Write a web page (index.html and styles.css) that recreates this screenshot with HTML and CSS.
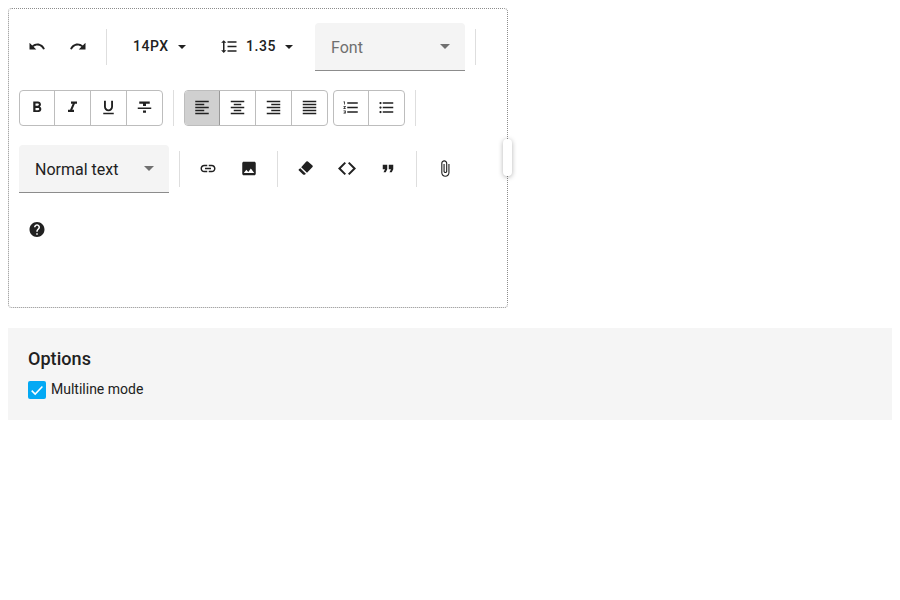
FILE: index.html
```html
<!DOCTYPE html>
<html lang="en">
<head>
<meta charset="utf-8">
<title>HTML editor</title>
<link rel="stylesheet" href="styles.css">
</head>
<body>
<div class="editor">
  <div class="row">
    <button class="btn"><svg class="icon" viewBox="0 0 24 24"><path d="M12.5 8c-2.65 0-5.05.99-6.9 2.6L2 7v9h9l-3.62-3.62c1.39-1.16 3.16-1.88 5.12-1.88 3.54 0 6.55 2.31 7.6 5.5l2.37-.78C21.08 11.03 17.15 8 12.5 8z"/></svg></button>
    <button class="btn gap"><svg class="icon" viewBox="0 0 24 24"><path d="M18.4 10.6C16.55 8.99 14.15 8 11.5 8c-4.65 0-8.58 3.03-9.96 7.22L3.9 16c1.05-3.19 4.05-5.5 7.6-5.5 1.95 0 3.73.72 5.12 1.88L13 16h9V7l-3.6 3.6z"/></svg></button>
    <span class="sep"></span>
    <button class="menu size"><span class="value">14PX</span><svg class="caret" viewBox="0 0 8 4"><path d="M0 0h8L4 4z"/></svg></button>
    <button class="menu height"><svg class="icon" viewBox="0 0 24 24"><path d="M6 7h2.5L5 3.5 1.5 7H4v10H1.5L5 20.5 8.5 17H6V7zm4-2v2h12V5H10zm0 14h12v-2H10v2zm0-6h12v-2H10v2z"/></svg><span class="value">1.35</span><svg class="caret" viewBox="0 0 8 4"><path d="M0 0h8L4 4z"/></svg></button>
    <div class="select gap placeholder"><span>Font</span><svg class="arrow" viewBox="0 0 10 5"><path d="M0 0h10L5 5z"/></svg></div>
    <span class="sep"></span>
  </div>
  <div class="row">
    <div class="group">
      <button class="cell"><svg class="icon" viewBox="0 0 24 24"><path d="M15.6 10.79c.97-.67 1.65-1.77 1.65-2.79 0-2.26-1.75-4-4-4H7v14h7.04c2.09 0 3.71-1.7 3.71-3.79 0-1.52-.86-2.82-2.15-3.42zM10 6.5h3c.83 0 1.5.67 1.5 1.5s-.67 1.5-1.5 1.5h-3v-3zm3.5 9H10v-3h3.5c.83 0 1.5.67 1.5 1.5s-.67 1.5-1.5 1.5z"/></svg></button>
      <button class="cell"><svg class="icon" viewBox="0 0 24 24"><path d="M10 4v3h2.21l-3.42 8H6v3h8v-3h-2.21l3.42-8H18V4z"/></svg></button>
      <button class="cell"><svg class="icon" viewBox="0 0 24 24"><path d="M12 17c3.31 0 6-2.69 6-6V3h-2.5v8c0 1.93-1.57 3.5-3.5 3.5S8.5 12.93 8.5 11V3H6v8c0 3.31 2.69 6 6 6zm-7 2v2h14v-2H5z"/></svg></button>
      <button class="cell"><svg class="icon" viewBox="0 0 24 24"><path d="M10 19h4v-3h-4v3zM5 4v3h5v3h4V7h5V4H5zM3 14h18v-2H3v2z"/></svg></button>
    </div>
    <span class="sep"></span>
    <div class="group">
      <button class="cell active"><svg class="icon" viewBox="0 0 24 24"><path d="M15 15H3v2h12v-2zm0-8H3v2h12V7zM3 13h18v-2H3v2zm0 8h18v-2H3v2zM3 3v2h18V3H3z"/></svg></button>
      <button class="cell"><svg class="icon" viewBox="0 0 24 24"><path d="M7 15v2h10v-2H7zm-4 6h18v-2H3v2zm0-8h18v-2H3v2zm4-6v2h10V7H7zM3 3v2h18V3H3z"/></svg></button>
      <button class="cell"><svg class="icon" viewBox="0 0 24 24"><path d="M3 21h18v-2H3v2zm6-4h12v-2H9v2zm-6-4h18v-2H3v2zm6-4h12V7H9v2zM3 3v2h18V3H3z"/></svg></button>
      <button class="cell"><svg class="icon" viewBox="0 0 24 24"><path d="M3 21h18v-2H3v2zm0-4h18v-2H3v2zm0-4h18v-2H3v2zm0-4h18V7H3v2zm0-6v2h18V3H3z"/></svg></button>
    </div>
    <div class="group gap">
      <button class="cell"><svg class="icon" viewBox="0 0 24 24"><path d="M2 17h2v.5H3v1h1v.5H2v1h3v-4H2v1zm1-9h1V4H2v1h1v3zm-1 3h1.8L2 13.1v.9h3v-1H3.2L5 10.9V10H2v1zm5-6v2h14V5H7zm0 14h14v-2H7v2zm0-6h14v-2H7v2z"/></svg></button>
      <button class="cell"><svg class="icon" viewBox="0 0 24 24"><path d="M4 10.5c-.83 0-1.5.67-1.5 1.5s.67 1.5 1.5 1.5 1.5-.67 1.5-1.5-.67-1.5-1.5-1.5zm0-6c-.83 0-1.5.67-1.5 1.5S3.17 7.5 4 7.5 5.5 6.83 5.5 6 4.83 4.5 4 4.5zm0 12c-.83 0-1.5.68-1.5 1.5s.68 1.5 1.5 1.5 1.5-.68 1.5-1.5-.67-1.5-1.5-1.5zM7 19h14v-2H7v2zm0-6h14v-2H7v2zm0-8v2h14V5H7z"/></svg></button>
    </div>
    <span class="sep"></span>
  </div>
  <div class="row">
    <div class="select"><span>Normal text</span><svg class="arrow" viewBox="0 0 10 5"><path d="M0 0h10L5 5z"/></svg></div>
    <span class="sep"></span>
    <button class="btn"><svg class="icon" viewBox="0 0 24 24"><path d="M3.9 12c0-1.71 1.39-3.1 3.1-3.1h4V7H7c-2.76 0-5 2.24-5 5s2.24 5 5 5h4v-1.9H7c-1.71 0-3.1-1.39-3.1-3.1zM8 13h8v-2H8v2zm9-6h-4v1.9h4c1.71 0 3.1 1.39 3.1 3.1s-1.39 3.1-3.1 3.1h-4V17h4c2.76 0 5-2.24 5-5s-2.24-5-5-5z"/></svg></button>
    <button class="btn gap"><svg class="icon" viewBox="0 0 24 24"><path d="M21 19V5c0-1.1-.9-2-2-2H5c-1.1 0-2 .9-2 2v14c0 1.1.9 2 2 2h14c1.1 0 2-.9 2-2zM8.5 13.5l2.500 3.01L14.500 12l4.500 6H5l3.500-4.500z"/></svg></button>
    <span class="sep"></span>
    <button class="btn"><svg class="icon" viewBox="0 0 18 18"><path d="M9.3 2.1q.8-.7 1.6 0l4.600 3.900q.7.700 0 1.500l-5.500 5.700-5.800-5.500zM3.300 8.700l5.600 5.500-.8.800q-1.100.8-2.300-.2L1.900 11.100q-.8-.8 0-1.400z"/></svg></button>
    <button class="btn gap"><svg class="icon line" viewBox="0 0 18 18"><path d="M7.300 3.100 1.400 9l5.900 5.900M10.700 3.100 16.600 9l-5.900 5.900"/></svg></button>
    <button class="btn gap"><svg class="icon" viewBox="0 0 24 24"><path d="M6 17h3l2-4V7H5v6h3zm8 0h3l2-4V7h-6v6h3z"/></svg></button>
    <span class="sep"></span>
    <button class="btn"><svg class="icon" viewBox="0 0 24 24"><path d="M16.5 6v11.5c0 2.21-1.79 4-4 4s-4-1.79-4-4V5c0-1.38 1.12-2.5 2.5-2.5s2.5 1.12 2.5 2.5v10.5c0 .55-.45 1-1 1s-1-.45-1-1V6H10v9.5c0 1.38 1.12 2.5 2.5 2.5s2.5-1.12 2.5-2.5V5c0-2.21-1.79-4-4-4S7 2.79 7 5v12.5c0 3.04 2.46 5.5 5.5 5.5s5.5-2.46 5.5-5.5V6h-1.5z"/></svg></button>
  </div>
  <div class="row">
    <button class="btn"><svg class="icon" viewBox="0 0 24 24"><path d="M12 2C6.48 2 2 6.48 2 12s4.48 10 10 10 10-4.48 10-10S17.52 2 12 2zm1 17h-2v-2h2v2zm2.07-7.75l-.9.92C13.45 12.9 13 13.5 13 15h-2v-.5c0-1.1.45-2.1 1.17-2.83l1.24-1.26c.37-.36.59-.86.59-1.41 0-1.1-.9-2-2-2s-2 .9-2 2H8c0-2.21 1.79-4 4-4s4 1.79 4 4c0 .88-.36 1.68-.93 2.25z"/></svg></button>
  </div>
  <span class="handle"></span>
</div>
<div class="options">
  <div class="caption">Options</div>
  <label class="option"><span class="check"><svg viewBox="0 0 18 18"><path d="M3.7 9.6 7.2 13.1 14.4 5.6"/></svg></span><span class="label">Multiline mode</span></label>
</div>
</body>
</html>
```
FILE: styles.css
```css
* { box-sizing: border-box; }

body {
  margin: 8px;
  background: #fff;
  color: #212121;
  font-family: Roboto, sans-serif;
  font-size: 14px;
}

.editor {
  position: relative;
  width: 500px;
  height: 300px;
  padding: 8px 10px;
  border: 1px dotted #8c8c8c;
  border-radius: 4px;
  display: flex;
  flex-direction: column;
  gap: 1px;
}

.row {
  height: 60px;
  display: flex;
  align-items: center;
}

.gap { margin-left: 5px; }

.sep {
  width: 1px;
  height: 36px;
  margin: 0 10px;
  background: #dedede;
}

button {
  margin: 0;
  padding: 0;
  border: 0;
  background: none;
  color: inherit;
  font: 500 14px/20px Roboto, sans-serif;
  display: flex;
  align-items: center;
  justify-content: center;
}

.btn {
  width: 36px;
  height: 36px;
}

.icon {
  display: block;
  width: 18px;
  height: 18px;
  fill: #212121;
  transform: translateY(-0.5px);
}

.cell + .cell .icon { transform: translate(-0.5px, -0.5px); }

.icon.line {
  fill: none;
  stroke: #212121;
  stroke-width: 2;
}

.menu {
  height: 36px;
  padding-left: 16px;
  justify-content: flex-start;
  letter-spacing: 0.56px;
}

.menu.size { width: 87px; }
.menu.height { width: 106px; }
.menu .icon { margin-right: 8px; }
.value { padding-bottom: 2px; }

.caret {
  width: 8px;
  height: 4px;
  margin-left: 9px;
  fill: #212121;
}

.select {
  width: 150px;
  height: 48px;
  padding: 0 15px 0 16px;
  border-bottom: 1px solid #8c8c8c;
  border-radius: 4px 4px 0 0;
  background: #f4f4f4;
  font-size: 16px;
  line-height: 20px;
  display: flex;
  align-items: center;
  justify-content: space-between;
}

.select span { padding-top: 2px; }

.placeholder { color: #6f6f6f; }

.arrow {
  width: 10px;
  height: 5px;
  fill: #707070;
}

.group {
  display: flex;
  height: 36px;
  border: 1px solid #bdbdbd;
  border-radius: 4px;
  overflow: hidden;
}

.cell {
  width: 36px;
  border-right: 1px solid #bdbdbd;
}

.cell:first-child { width: 35px; }

.cell:last-child {
  width: 35px;
  border-right: 0;
}

.cell.active {
  background: #d0d0d0;
  border-color: #999;
}

.handle {
  position: absolute;
  top: 130px;
  right: -5px;
  width: 9px;
  height: 37px;
  border-radius: 4px;
  background: #fff;
  box-shadow: 0 1px 5px rgba(0, 0, 0, 0.3);
}

.options {
  height: 92px;
  margin-top: 20px;
  padding: 20px;
  background: #f5f5f5;
}

.caption {
  font-size: 18px;
  font-weight: 500;
  line-height: 21px;
  letter-spacing: 0.05px;
}

.option {
  display: flex;
  align-items: center;
  height: 18px;
  margin-top: 12px;
  gap: 5px;
  line-height: 16px;
}

.label { padding-bottom: 2px; }

.check {
  width: 18px;
  height: 18px;
  border-radius: 2px;
  background: #03a9f4;
}

.check svg {
  display: block;
  fill: none;
  stroke: #fff;
  stroke-width: 1.5;
}
```
